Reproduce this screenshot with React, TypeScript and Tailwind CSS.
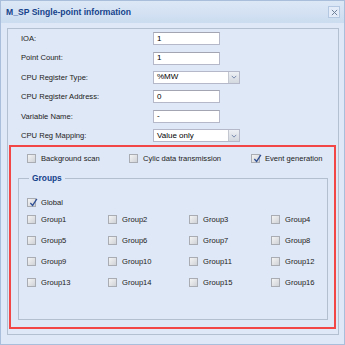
import React from "react";

const Check = ({ checked = false }: { checked?: boolean }) => (
  <span className="relative flex h-[9px] w-[9px] shrink-0 items-center justify-center border border-[#a9adb3] bg-gradient-to-br from-[#f4f4f4] to-[#cfd2d6]">
    {checked && (
      <svg viewBox="0 0 10 10" className="absolute left-[1px] top-[-1px] h-[9px] w-[9px]">
        <path d="M1.5 5.5 L4 8.2 L8.8 1" fill="none" stroke="#2f4f94" strokeWidth="1.4" />
      </svg>
    )}
  </span>
);

const TextField = ({ value }: { value: string }) => (
  <div className="flex h-[13px] w-[67px] items-center border border-[#b5b8c8] border-t-[#a3a6b2] bg-white pl-[3px] text-[8px] text-black">
    {value}
  </div>
);

const SelectField = ({ value }: { value: string }) => (
  <div className="flex h-[13px] w-[87px] items-stretch border border-[#b5b8c8] bg-white text-[8px] text-black">
    <span className="flex flex-1 items-center pl-[3px]">{value}</span>
    <span className="flex w-[11px] items-center justify-center border-l border-[#c3c7cf] bg-gradient-to-b from-[#eef1f5] to-[#d3d8df]">
      <svg viewBox="0 0 8 5" className="h-[4px] w-[6px]">
        <path d="M1 1 L4 4 L7 1" fill="none" stroke="#6d7fa6" strokeWidth="1.2" />
      </svg>
    </span>
  </div>
);

const rows: { label: string; kind: "text" | "select"; value: string }[] = [
  { label: "IOA:", kind: "text", value: "1" },
  { label: "Point Count:", kind: "text", value: "1" },
  { label: "CPU Register Type:", kind: "select", value: "%MW" },
  { label: "CPU Register Address:", kind: "text", value: "0" },
  { label: "Variable Name:", kind: "text", value: "-" },
  { label: "CPU Reg Mapping:", kind: "select", value: "Value only" },
];

const groups = Array.from({ length: 16 }, (_, i) => `Group${i + 1}`);

export default function App() {
  return (
    <div
      className="flex h-[345px] w-[345px] flex-col border border-[#a8bedb] bg-[#dfe8f6] text-[7.6px] text-[#222]"
      style={{ fontFamily: '"Liberation Sans", Arial, sans-serif' }}
    >
      {/* title bar */}
      <div className="flex h-[22px] shrink-0 items-center justify-between bg-gradient-to-b from-[#dde8f6] to-[#cbdcf0] pl-[5px] pr-[4px]">
        <span className="text-[8.6px] font-bold text-[#15428b]">M_SP Single-point information</span>
        <span className="flex h-[12px] w-[12px] items-center justify-center border border-[#b4c8e2] bg-[#e3ecf8]">
          <svg viewBox="0 0 8 8" className="h-[7px] w-[7px]">
            <path d="M1 1 L7 7 M7 1 L1 7" stroke="#6b7c96" strokeWidth="1.1" />
          </svg>
        </span>
      </div>

      {/* body */}
      <div className="flex flex-1 flex-col pb-[9px] pl-[6px] pr-[5px] pt-[5px]">
        <div className="flex flex-1 flex-col border border-[#b3c0d2]">
          <div className="flex flex-col pl-[13px]">
            {rows.map((r) => (
              <div key={r.label} className="flex h-[19.4px] items-center">
                <span className="w-[132px]">{r.label}</span>
                {r.kind === "text" ? <TextField value={r.value} /> : <SelectField value={r.value} />}
              </div>
            ))}
          </div>

          <div className="mb-[5px] ml-[1px] mr-[2px] flex flex-1 flex-col border-2 border-[#f24646]">
            <div className="flex h-[23px] items-center pl-[16px]">
              <div className="flex w-[102px] items-center gap-[5px]">
                <Check />
                <span>Background scan</span>
              </div>
              <div className="flex w-[122px] items-center gap-[5px]">
                <Check />
                <span>Cylic data transmission</span>
              </div>
              <div className="flex items-center gap-[5px]">
                <Check checked />
                <span>Event generation</span>
              </div>
            </div>

            <fieldset className="mb-[7px] ml-[7px] mr-[6px] mt-[2px] flex-1 border border-[#b3bfce] pl-[8px]">
              <legend className="ml-[2px] px-[3px] text-[8.4px] font-bold text-[#15428b]">Groups</legend>
              <div className="mt-[11px] flex h-[13px] items-center gap-[5px]">
                <Check checked />
                <span>Global</span>
              </div>
              <div className="grid grid-cols-[81px_81px_82px_auto] auto-rows-[21px]">
                {groups.map((g) => (
                  <div key={g} className="flex items-center gap-[5px]">
                    <Check />
                    <span>{g}</span>
                  </div>
                ))}
              </div>
            </fieldset>
          </div>
        </div>
      </div>
    </div>
  );
}
